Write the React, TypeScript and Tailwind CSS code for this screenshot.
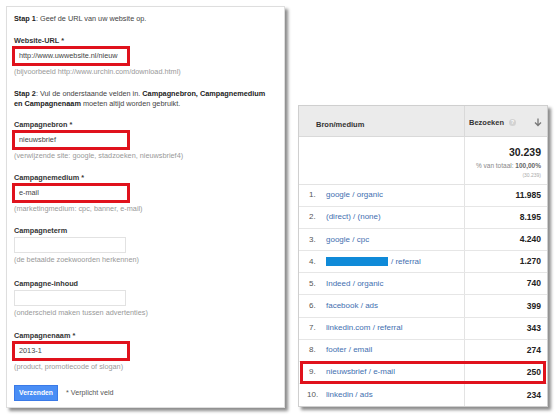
import React from 'react';

const font = "font-['Liberation_Sans',Arial,sans-serif]";

function Field({ label, value, hint, marked, mt }: { label: string; value?: string; hint: string; marked: boolean; mt: string }) {
  return (
    <div className={mt}>
      <div className="text-[7.3px] leading-[11px] font-bold text-[#333]">{label}</div>
      {marked ? (
        <div className="-ml-[2px] w-[118px] h-[20px] border-[3px] border-[#e0121c] bg-white flex items-center pl-[4px] text-[7.3px] text-[#444]">
          {value}
        </div>
      ) : (
        <div className="h-[18px] pt-[1px]">
          <div className="w-[112px] h-[16px] border border-[#e2e2e2] bg-white" />
        </div>
      )}
      <div className="text-[7.3px] leading-[11px] text-[#999]">{hint}</div>
    </div>
  );
}

const rows: { n: string; src: React.ReactNode; v: string }[] = [
  { n: '1.', src: 'google / organic', v: '11.985' },
  { n: '2.', src: '(direct) / (none)', v: '8.195' },
  { n: '3.', src: 'google / cpc', v: '4.240' },
  {
    n: '4.',
    src: (
      <span className="flex items-center gap-[3px]">
        <span className="inline-block w-[62px] h-[9px] bg-[#0f8ad8]" />/ referral
      </span>
    ),
    v: '1.270',
  },
  { n: '5.', src: 'Indeed / organic', v: '740' },
  { n: '6.', src: 'facebook / ads', v: '399' },
  { n: '7.', src: 'linkedin.com / referral', v: '343' },
  { n: '8.', src: 'footer / email', v: '274' },
  { n: '9.', src: 'nieuwsbrief / e-mail', v: '250' },
  { n: '10.', src: 'linkedin / ads', v: '234' },
];

export default function App() {
  return (
    <div className={`w-[559px] h-[419px] bg-white flex items-start pt-[6px] pl-[6px] ${font}`}>
      {/* Campaign URL form */}
      <div className="w-[279px] h-[402px] border border-[#dedede] bg-white shadow-[3px_3px_3px_rgba(0,0,0,0.45)] pl-[7px] pt-[6px] text-[#444] shrink-0">
        <div className="text-[7.3px] leading-[12px]">
          <b className="text-[#222]">Stap 1</b>: Geef de URL van uw website op.
        </div>
        <Field mt="mt-[10px]" label="Website-URL *" value="http://www.uwwebsite.nl/nieuw" hint="(bijvoorbeeld http://www.urchin.com/download.html)" marked />
        <div className="mt-[12px] text-[7.3px] leading-[10px] whitespace-nowrap">
          <b className="text-[#222]">Stap 2</b>: Vul de onderstaande velden in. <b className="text-[#222]">Campagnebron, Campagnemedium</b>
          <br />
          <b className="text-[#222]">en Campagnenaam</b> moeten altijd worden gebruikt.
        </div>
        <Field mt="mt-[10px]" label="Campagnebron *" value="nieuwsbrief" hint="(verwijzende site: google, stadzoeken, nieuwsbrief4)" marked />
        <Field mt="mt-[11px]" label="Campagnemedium *" value="e-mail" hint="(marketingmedium: cpc, banner, e-mail)" marked />
        <Field mt="mt-[11px]" label="Campagneterm" hint="(de betaalde zoekwoorden herkennen)" marked={false} />
        <Field mt="mt-[13px]" label="Campagne-inhoud" hint="(onderscheid maken tussen advertenties)" marked={false} />
        <Field mt="mt-[12px]" label="Campagnenaam *" value="2013-1" hint="(product, promotiecode of slogan)" marked />
        <div className="mt-[13px] flex items-center gap-[8px]">
          <button className="w-[44px] h-[16px] bg-[#4a8ef5] border border-[#3a7ae8] text-white text-[6.8px] font-bold flex items-center justify-center">
            Verzenden
          </button>
          <span className="text-[7.2px] text-[#555]">* Verplicht veld</span>
        </div>
      </div>

      {/* Analytics table */}
      <div className="mt-[99px] ml-[13px] w-[250px] h-[302px] border border-[#cfcfcf] bg-white shadow-[3px_3px_3px_rgba(0,0,0,0.45)] flex flex-col text-[#222] shrink-0">
        <div className="h-[31px] flex bg-[#ebebeb] border-b border-[#d9d9d9]">
          <div className="w-[165px] pl-[17px] pt-[13px] text-[7.5px] font-bold text-[#333]">Bron/medium</div>
          <div className="flex-1 border-l border-[#d9d9d9] flex items-center pl-[4px] pr-[5px] pt-[4px] text-[7.5px] font-bold text-[#333]">
            Bezoeken
            <span className="ml-[5px] w-[7px] h-[7px] rounded-full bg-[#d2d2d2] text-white text-[5px] leading-[7px] text-center">?</span>
            <svg className="ml-auto" width="8" height="9" viewBox="0 0 8 9">
              <path d="M4 0.5v7M1 4.5l3 3 3-3" fill="none" stroke="#777" strokeWidth="1.3" />
            </svg>
          </div>
        </div>
        <div className="h-[48px] flex border-b border-[#e3e3e3]">
          <div className="w-[165px]" />
          <div className="flex-1 border-l border-[#e3e3e3] pr-[6px] pt-[9px] text-right">
            <div className="text-[10.5px] leading-[12px] font-bold">30.239</div>
            <div className="mt-[3px] text-[6.5px] leading-[10px] text-[#888]">
              % van totaal: <b className="text-[#666]">100,00%</b>
            </div>
            <div className="text-[5px] leading-[8px] text-[#aaa]">(30.239)</div>
          </div>
        </div>
        {rows.map((r, i) => (
          <div key={r.n} className={`relative h-[22.2px] flex ${i < rows.length - 1 ? 'border-b border-[#e6e6e6]' : ''}`}>
            <div className="w-[165px] flex items-center pl-[10px] text-[8px]">
              <span className={`${r.n === '10.' ? '-ml-[2px] w-[19px]' : 'w-[17px]'} text-[#555]`}>{r.n}</span>
              <span className="text-[#3f6fb0]">{r.src}</span>
            </div>
            <div className="flex-1 border-l border-[#e3e3e3] flex items-center justify-end pr-[6px] text-[8.5px] font-bold">
              {r.v}
            </div>
            {r.n === '9.' && <div className="absolute left-[1px] right-[1px] -top-[1px] -bottom-[1px] border-[3px] border-[#e0121c]" />}
          </div>
        ))}
      </div>
    </div>
  );
}
